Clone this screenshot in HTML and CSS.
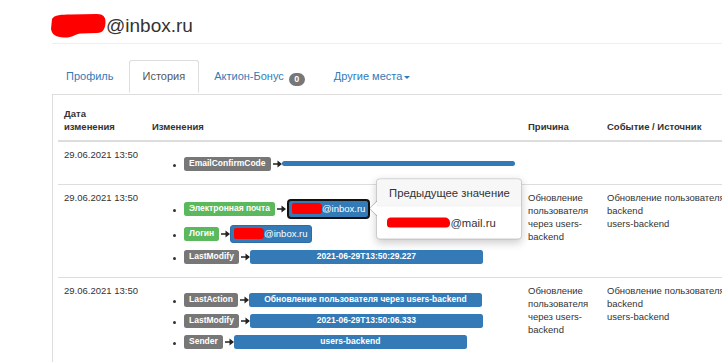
FILE: index.html
```html
<!DOCTYPE html>
<html lang="ru">
<head>
    <meta charset="UTF-8">
    <meta name="viewport" content="width=device-width, initial-scale=1.0">
    <title>История изменений</title>
    <link rel="stylesheet" href="styles.css">
</head>
<body>
    <div class="page">
        <h1 class="page-header">
            <svg class="redact-blob" viewBox="0 0 56 25" xmlns="http://www.w3.org/2000/svg">
                <path d="M2 6C4 2 12 1.5 20 1.5L47 1C53 1 56 4 55.5 10C55 16 53 20 47 20L31 20.5C25 21 22 25 14 24.5C6 24 2 22 1 16Z" fill="#ff0000"/>
            </svg>@inbox.ru
        </h1>

        <ul class="nav-tabs">
            <li><a href="#">Профиль</a></li>
            <li class="active"><a href="#">История</a></li>
            <li><a href="#">Актион-Бонус <span class="badge">0</span></a></li>
            <li><a href="#">Другие места<span class="caret"></span></a></li>
        </ul>

        <div class="tab-content">
            <table class="history">
                <colgroup>
                    <col class="col-date">
                    <col class="col-changes">
                    <col class="col-reason">
                    <col class="col-event">
                </colgroup>
                <thead>
                    <tr>
                        <th>Дата<br>изменения</th>
                        <th>Изменения</th>
                        <th>Причина</th>
                        <th>Событие / Источник</th>
                    </tr>
                </thead>
                <tbody>
                    <tr>
                        <td>29.06.2021 13:50</td>
                        <td>
                            <ul class="changes">
                                <li>
                                    <span class="label label-default">EmailConfirmCode</span>
                                    <svg class="arrow" viewBox="0 0 9 8" xmlns="http://www.w3.org/2000/svg"><path d="M0 3.2H5V4.8H0Z M4.5 0.5L9 4L4.5 7.5Z" fill="#222"/></svg>
                                    <span class="label label-primary label-value"></span>
                                </li>
                            </ul>
                        </td>
                        <td></td>
                        <td></td>
                    </tr>
                    <tr>
                        <td>29.06.2021 13:50</td>
                        <td>
                            <ul class="changes">
                                <li>
                                    <span class="label label-success">Электронная почта</span>
                                    <svg class="arrow" viewBox="0 0 9 8" xmlns="http://www.w3.org/2000/svg"><path d="M0 3.2H5V4.8H0Z M4.5 0.5L9 4L4.5 7.5Z" fill="#222"/></svg>
                                    <span class="label label-primary label-email focused">
                                        <span class="redact"></span>@inbox.ru
                                        <span class="popover">
                                            <span class="popover-title">Предыдущее значение</span>
                                            <span class="popover-content"><span class="redact redact-wide"></span>@mail.ru</span>
                                        </span>
                                    </span>
                                </li>
                                <li>
                                    <span class="label label-success">Логин</span>
                                    <svg class="arrow" viewBox="0 0 9 8" xmlns="http://www.w3.org/2000/svg"><path d="M0 3.2H5V4.8H0Z M4.5 0.5L9 4L4.5 7.5Z" fill="#222"/></svg>
                                    <span class="label label-primary label-email"><span class="redact"></span>@inbox.ru</span>
                                </li>
                                <li>
                                    <span class="label label-default">LastModify</span>
                                    <svg class="arrow" viewBox="0 0 9 8" xmlns="http://www.w3.org/2000/svg"><path d="M0 3.2H5V4.8H0Z M4.5 0.5L9 4L4.5 7.5Z" fill="#222"/></svg>
                                    <span class="label label-primary label-value">2021-06-29T13:50:29.227</span>
                                </li>
                            </ul>
                        </td>
                        <td>Обновление пользователя через users-backend</td>
                        <td class="event">Обновление пользователя через users-<br>backend<br>users-backend</td>
                    </tr>
                    <tr>
                        <td>29.06.2021 13:50</td>
                        <td>
                            <ul class="changes">
                                <li>
                                    <span class="label label-default">LastAction</span>
                                    <svg class="arrow" viewBox="0 0 9 8" xmlns="http://www.w3.org/2000/svg"><path d="M0 3.2H5V4.8H0Z M4.5 0.5L9 4L4.5 7.5Z" fill="#222"/></svg>
                                    <span class="label label-primary label-value">Обновление пользователя через users-backend</span>
                                </li>
                                <li>
                                    <span class="label label-default">LastModify</span>
                                    <svg class="arrow" viewBox="0 0 9 8" xmlns="http://www.w3.org/2000/svg"><path d="M0 3.2H5V4.8H0Z M4.5 0.5L9 4L4.5 7.5Z" fill="#222"/></svg>
                                    <span class="label label-primary label-value">2021-06-29T13:50:06.333</span>
                                </li>
                                <li>
                                    <span class="label label-default">Sender</span>
                                    <svg class="arrow" viewBox="0 0 9 8" xmlns="http://www.w3.org/2000/svg"><path d="M0 3.2H5V4.8H0Z M4.5 0.5L9 4L4.5 7.5Z" fill="#222"/></svg>
                                    <span class="label label-primary label-value">users-backend</span>
                                </li>
                            </ul>
                        </td>
                        <td>Обновление пользователя через users-backend</td>
                        <td class="event">Обновление пользователя через users-<br>backend<br>users-backend</td>
                    </tr>
                </tbody>
            </table>
        </div>
    </div>
</body>
</html>
```

FILE: styles.css
```css
html {
    overflow: hidden;
}

body {
    margin: 0;
    font-family: "Liberation Sans", Arial, sans-serif;
    color: #333;
    background: #fff;
}

.page {
    padding-left: 52px;
}

.page-header {
    display: flex;
    align-items: center;
    margin: 0;
    padding: 13px 0 5px;
    font-size: 19px;
    font-weight: normal;
    line-height: 21px;
    border-bottom: 1px solid #eee;
}

.redact-blob {
    width: 56px;
    height: 25px;
    margin-left: -2px;
    flex: none;
}

.nav-tabs {
    display: flex;
    list-style: none;
    margin: 16px 0 0;
    padding: 0;
    border-bottom: 1px solid #ddd;
    font-size: 11px;
    line-height: 15px;
}

.nav-tabs li {
    margin: 0 1px -1px 0;
}

.nav-tabs a {
    display: block;
    padding: 8px 13px;
    border: 1px solid transparent;
    border-radius: 3px 3px 0 0;
    color: #337ab7;
    text-decoration: none;
}

.nav-tabs .active a {
    color: #555;
    background: #fff;
    border-color: #ddd #ddd transparent;
}

.badge {
    display: inline-block;
    min-width: 16px;
    padding: 0 4px;
    box-sizing: border-box;
    margin-left: 2px;
    font-size: 9px;
    font-weight: bold;
    line-height: 13px;
    text-align: center;
    color: #fff;
    background: #777;
    border-radius: 7px;
    vertical-align: -2px;
}

.caret {
    display: inline-block;
    width: 0;
    height: 0;
    margin-left: 2px;
    vertical-align: middle;
    border-top: 3.5px solid;
    border-left: 3.5px solid transparent;
    border-right: 3.5px solid transparent;
}

.tab-content {
    border-left: 1px solid #ddd;
    padding: 6px 0 0 5px;
}

.history {
    width: 743px;
    table-layout: fixed;
    border-collapse: collapse;
    font-size: 9.5px;
    line-height: 13.3px;
}

.col-date { width: 88px; }
.col-changes { width: 376px; }
.col-reason { width: 79px; }
.col-event { width: 200px; }

.history th {
    padding: 6px;
    text-align: left;
    vertical-align: bottom;
    font-weight: bold;
    border-bottom: 2px solid #ddd;
}

.history td {
    padding: 6px;
    vertical-align: top;
    border-top: 1px solid #ddd;
    border-bottom: 1px solid #ddd;
}

.history .event {
    white-space: nowrap;
}

.changes {
    list-style: none;
    margin: 9px 0 0;
    padding: 0 0 0 32px;
}

.changes li {
    display: flex;
    align-items: center;
    margin-bottom: 7px;
}

.changes li::before {
    content: "";
    width: 3px;
    height: 3px;
    margin: 3px 8px 0 -11px;
    border-radius: 50%;
    background: #333;
    flex: none;
}

.label {
    padding: 2px 5px 2.5px;
    font-size: 8.5px;
    font-weight: bold;
    line-height: 9.5px;
    color: #fff;
    white-space: nowrap;
    border-radius: 2.5px;
}

.label-default { background: #777; }
.label-success { background: #5cb85c; }
.label-primary { background: #337ab7; }

.label-value {
    width: 233px;
    box-sizing: border-box;
    text-align: center;
}

.arrow {
    width: 9px;
    height: 8px;
    margin-left: 2px;
    flex: none;
}

.label-email {
    position: relative;
    display: flex;
    align-items: center;
    padding: 2px 3px;
    font-size: 9.5px;
    font-weight: normal;
    line-height: 12px;
    border: 1px solid #2e6da4;
    border-radius: 3px;
}

.label-email.focused {
    margin-left: 2px;
    border-color: #111;
    box-shadow: 0 0 0 1px #111;
}

.redact {
    display: inline-block;
    width: 30px;
    height: 11px;
    background: #ff0000;
    border-radius: 2px 4px 3px 2px;
}

.redact-wide {
    width: 63px;
    height: 10px;
    border-radius: 4px 5px 4px 3px;
}

.popover {
    position: absolute;
    left: calc(100% + 8px);
    top: 50%;
    transform: translateY(-50%);
    z-index: 2;
    display: block;
    width: 144px;
    font-size: 11.3px;
    font-weight: normal;
    line-height: 14px;
    color: #333;
    background: #fff;
    border: 1px solid rgba(0, 0, 0, 0.2);
    border-radius: 4px;
    box-shadow: 0 3px 8px rgba(0, 0, 0, 0.2);
    white-space: nowrap;
}

.popover::before,
.popover::after {
    content: "";
    position: absolute;
    top: 50%;
    border-style: solid;
    border-color: transparent;
}

.popover::before {
    left: -8px;
    margin-top: -8px;
    border-width: 8px 8px 8px 0;
    border-right-color: rgba(0, 0, 0, 0.25);
}

.popover::after {
    left: -7px;
    margin-top: -7px;
    border-width: 7px 7px 7px 0;
    border-right-color: #fff;
}

.popover-title {
    display: block;
    padding: 6px 9px;
    text-align: center;
    background: #f7f7f7;
    border-bottom: 1px solid #ebebeb;
    border-radius: 3px 3px 0 0;
}

.popover-content {
    display: flex;
    align-items: center;
    padding: 9px 9px 9px 10px;
}
```
